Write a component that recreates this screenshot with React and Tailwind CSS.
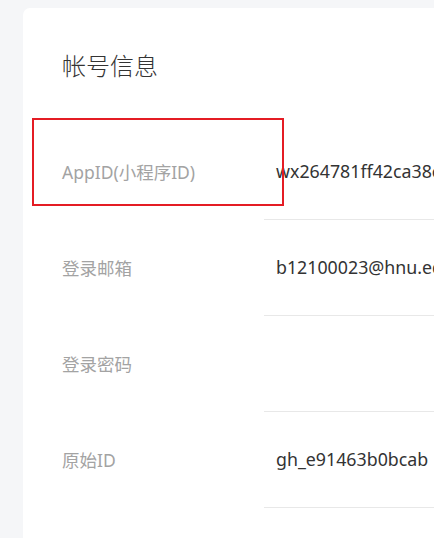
import React from "react";

const rows = [
  { label: "AppID(小程序ID)", value: "wx264781ff42ca38c5", marked: true },
  { label: "登录邮箱", value: "b12100023@hnu.edu.cn" },
  { label: "登录密码", value: "" },
  { label: "原始ID", value: "gh_e91463b0bcab" },
];

const App = () => {
  return (
    <div
      className="h-[538px] w-full overflow-hidden bg-[#f5f6f8] pl-[23px] pt-[8px]"
      style={{ fontFamily: '"Noto Sans", "Noto Sans CJK SC", sans-serif' }}
    >
      <div className="-mr-[40px] h-[600px] rounded-[7px] bg-white pl-[39px] pt-[42px]">
        <h1 className="text-[24px] leading-[32px] font-light text-[#333]">
          帐号信息
        </h1>

        {/* account rows */}
        <div className="mt-[42px] flex flex-col">
          {rows.map((row) => (
            <div key={row.label} className="relative flex h-[96px] items-center">
              {row.marked && (
                <div className="pointer-events-none absolute -left-[30px] -top-[6px] h-[88px] w-[252px] border-2 border-[#e41c24]" />
              )}
              <div className="w-[202px] shrink-0 text-[17.5px] text-[#a3a3a3]">
                {row.label}
              </div>
              <div className="flex h-full flex-1 items-center whitespace-nowrap border-b border-[#e8e8e8] pl-[12px] text-[17.8px] text-[#333]">
                {row.value}
              </div>
            </div>
          ))}
        </div>
      </div>
    </div>
  );
};

export default App;
